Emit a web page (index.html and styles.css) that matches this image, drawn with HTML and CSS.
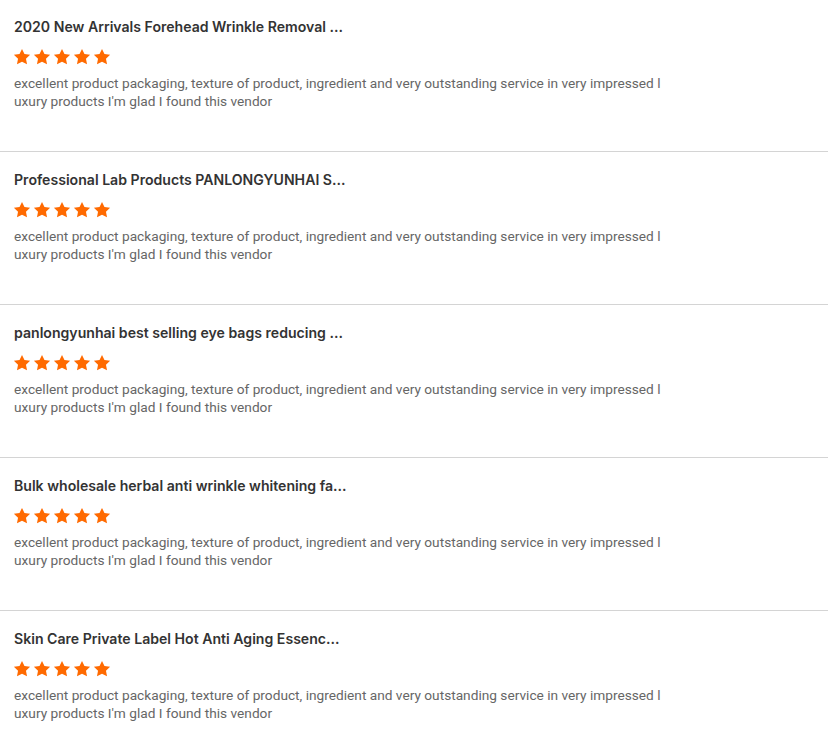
FILE: index.html
```html
<!DOCTYPE html>
<html>
<head>
<meta charset="utf-8">
<link rel="stylesheet" href="styles.css">
</head>
<body>
<svg width="0" height="0" class="defs">
  <defs>
    <symbol id="star" viewBox="0 0 24 24">
      <path d="M12 1.2l3.3 6.9 7.5 1-5.5 5.2 1.4 7.5L12 18.2l-6.7 3.6 1.4-7.5L1.2 9.1l7.5-1z"/>
    </symbol>
  </defs>
</svg>
<div class="list">
  <div class="review">
    <div class="title">2020 New Arrivals Forehead Wrinkle Removal ...</div>
    <div class="stars"><svg><use href="#star"/></svg><svg><use href="#star"/></svg><svg><use href="#star"/></svg><svg><use href="#star"/></svg><svg><use href="#star"/></svg></div>
    <p class="text">excellent product packaging, texture of product, ingredient and very outstanding service in very impressed luxury products I'm glad I found this vendor</p>
  </div>
  <div class="review">
    <div class="title">Professional Lab Products PANLONGYUNHAI S...</div>
    <div class="stars"><svg><use href="#star"/></svg><svg><use href="#star"/></svg><svg><use href="#star"/></svg><svg><use href="#star"/></svg><svg><use href="#star"/></svg></div>
    <p class="text">excellent product packaging, texture of product, ingredient and very outstanding service in very impressed luxury products I'm glad I found this vendor</p>
  </div>
  <div class="review">
    <div class="title">panlongyunhai best selling eye bags reducing ...</div>
    <div class="stars"><svg><use href="#star"/></svg><svg><use href="#star"/></svg><svg><use href="#star"/></svg><svg><use href="#star"/></svg><svg><use href="#star"/></svg></div>
    <p class="text">excellent product packaging, texture of product, ingredient and very outstanding service in very impressed luxury products I'm glad I found this vendor</p>
  </div>
  <div class="review">
    <div class="title">Bulk wholesale herbal anti wrinkle whitening fa...</div>
    <div class="stars"><svg><use href="#star"/></svg><svg><use href="#star"/></svg><svg><use href="#star"/></svg><svg><use href="#star"/></svg><svg><use href="#star"/></svg></div>
    <p class="text">excellent product packaging, texture of product, ingredient and very outstanding service in very impressed luxury products I'm glad I found this vendor</p>
  </div>
  <div class="review">
    <div class="title">Skin Care Private Label Hot Anti Aging Essenc...</div>
    <div class="stars"><svg><use href="#star"/></svg><svg><use href="#star"/></svg><svg><use href="#star"/></svg><svg><use href="#star"/></svg><svg><use href="#star"/></svg></div>
    <p class="text">excellent product packaging, texture of product, ingredient and very outstanding service in very impressed luxury products I'm glad I found this vendor</p>
  </div>
</div>
</body>
</html>
```
FILE: styles.css
```css
html, body {
  margin: 0;
  padding: 0;
  background: #fff;
}
.defs {
  position: absolute;
  width: 0;
  height: 0;
}
.list {
  display: flex;
  flex-direction: column;
  margin-top: -1px;
}
.review {
  box-sizing: border-box;
  height: 153px;
  padding: 18px 14px 0;
  border-bottom: 1px solid #d4d4d4;
}
.title {
  font-family: Inter, sans-serif;
  font-weight: 600;
  font-size: 14.1px;
  line-height: 20px;
  color: #333;
  white-space: nowrap;
}
.stars {
  display: flex;
  gap: 2px;
  margin: 11px 0 0 -1px;
  height: 18px;
}
.stars svg {
  width: 18px;
  height: 18px;
  fill: #ff6a00;
}
.text {
  margin: 8px 0 0;
  width: 652px;
  font-family: Roboto, sans-serif;
  font-size: 13.7px;
  line-height: 18px;
  color: #666;
  word-break: break-all;
}
```
